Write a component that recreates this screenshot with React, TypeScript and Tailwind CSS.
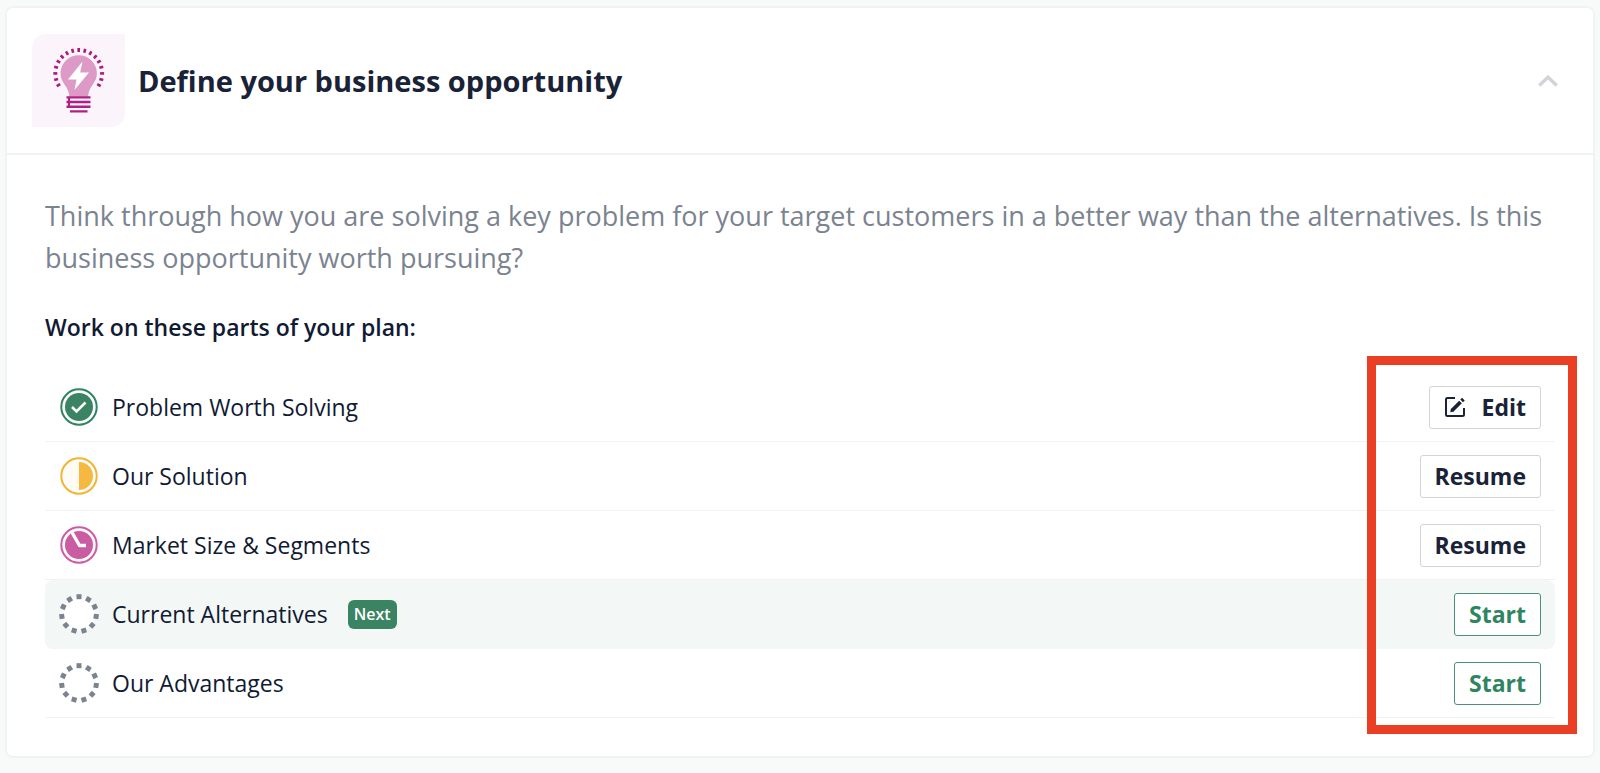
import { clsx } from "clsx";

type PartStatus = "done" | "half" | "started" | "empty";

type PlanPart = {
  label: string;
  status: PartStatus;
  action: "Edit" | "Resume" | "Start";
  isNext?: boolean;
};

const PLAN_PARTS: PlanPart[] = [
  { label: "Problem Worth Solving", status: "done", action: "Edit" },
  { label: "Our Solution", status: "half", action: "Resume" },
  { label: "Market Size & Segments", status: "started", action: "Resume" },
  {
    label: "Current Alternatives",
    status: "empty",
    action: "Start",
    isNext: true,
  },
  { label: "Our Advantages", status: "empty", action: "Start" },
];

const RAY_ANGLES = Array.from({ length: 17 }, (_, i) => (i - 8) * 15);
const DASH_ANGLES = Array.from({ length: 11 }, (_, i) => (i * 360) / 11);

const BulbIcon = () => (
  <svg viewBox="0 0 93 93" className="size-full" aria-hidden="true">
    {RAY_ANGLES.map((angle) => (
      <rect
        key={angle}
        x="45.4"
        y="14"
        width="2.6"
        height="4"
        fill="#ab1a7d"
        transform={`rotate(${angle} 46.7 39.4)`}
      />
    ))}
    <path
      d="M46.7 21.2a18.2 18.2 0 0 1 18.2 18.2c0 9.5-8.2 12.5-8.9 23H37.4c-.7-10.5-8.9-13.5-8.9-23A18.2 18.2 0 0 1 46.7 21.2Z"
      fill="#dd9ac6"
    />
    <path d="M50.5 27.5 36 45.5h8.5L42.5 56 57 38.5h-8.8Z" fill="#fff" />
    <path
      d="M34.5 63.4h24M34.5 68h24M34.5 72.7h24M38 77.4h17.5"
      stroke="#b01f82"
      strokeWidth="2.4"
    />
    <path d="M37 63v10" stroke="#b01f82" strokeWidth="2" />
  </svg>
);

const ChevronIcon = () => (
  <svg
    viewBox="0 0 20 12"
    className="h-3 w-5"
    fill="none"
    stroke="currentColor"
    strokeWidth="3.4"
    aria-hidden="true"
  >
    <path d="m1.2 10.5 8.8-8.3 8.8 8.3" />
  </svg>
);

const EditIcon = () => (
  <svg
    viewBox="0 0 22 22"
    className="size-[22px]"
    fill="none"
    stroke="currentColor"
    aria-hidden="true"
  >
    <path
      d="M11 2H3.5A1.5 1.5 0 0 0 2 3.5v15A1.5 1.5 0 0 0 3.5 20h15a1.5 1.5 0 0 0 1.5-1.5V12"
      strokeWidth="2"
    />
    <path d="m8 14.5 8.5-8.5M17.6 4.9l1.8-1.8" strokeWidth="3.8" />
    <path d="M6.2 16.3 7 12.5l3 3Z" fill="currentColor" stroke="none" />
  </svg>
);

const StatusIcon = ({ status }: { status: PartStatus }) => {
  if (status === "empty") {
    return (
      <svg viewBox="0 0 40 40" className="size-10" aria-hidden="true">
        <circle cx="20" cy="20" r="17" fill="#fff" />
        {DASH_ANGLES.map((angle) => (
          <rect
            key={angle}
            x="17.5"
            y="0.2"
            width="5"
            height="5"
            fill="#7b8390"
            transform={`rotate(${angle} 20 20)`}
          />
        ))}
      </svg>
    );
  }

  return (
    <svg viewBox="0 0 40 40" className="size-10" fill="none" aria-hidden="true">
      {status === "done" && (
        <>
          <circle cx="20" cy="20" r="17.7" fill="#fff" stroke="#2f8560" strokeWidth="2" />
          <circle cx="20" cy="20" r="14" fill="#3b8463" />
          <path d="m13 20 4.5 4.5 9-9" stroke="#fff" strokeWidth="2.6" />
        </>
      )}
      {status === "half" && (
        <>
          <circle cx="20" cy="20" r="17.7" fill="#fff" stroke="#f5b42e" strokeWidth="2" />
          <circle cx="20" cy="20" r="14" fill="#fffbf3" />
          <path d="M20 6a14 14 0 0 1 0 28Z" fill="#f5b942" />
        </>
      )}
      {status === "started" && (
        <>
          <circle cx="20" cy="20" r="17.7" fill="#fff" stroke="#cf5ba5" strokeWidth="2" />
          <circle cx="20" cy="20" r="14" fill="#cb5ba2" />
          <path
            d="m13 7.5 7.5 13H27"
            stroke="#fff"
            strokeWidth="3.4"
            strokeLinejoin="round"
          />
        </>
      )}
    </svg>
  );
};

const PartRow = ({ part }: { part: PlanPart }) => {
  return (
    <li
      className={clsx(
        "flex h-[69px] items-center border-b px-[14px]",
        part.isNext
          ? "rounded-lg border-[#f3f7f6] bg-[#f3f7f6]"
          : "border-[#f1f2f2]"
      )}
    >
      <StatusIcon status={part.status} />
      <span className="ml-[13px] text-[23px]">{part.label}</span>
      {part.isNext && (
        <span className="ml-5 flex h-[29px] items-center rounded-md bg-[#3b8463] px-1.5 text-base font-semibold text-white">
          Next
        </span>
      )}
      <button
        type="button"
        className={clsx(
          "ml-auto flex h-[43px] items-center gap-4 rounded-[3px] border bg-white px-[14px] text-[23px] font-bold",
          part.action === "Start"
            ? "border-[#4a9273] text-[#2f8560]"
            : "border-[#d3d4d6] text-[#1a2238]"
        )}
      >
        {part.action === "Edit" && <EditIcon />}
        {part.action}
      </button>
    </li>
  );
};

export default function App() {
  return (
    <main className="min-h-screen bg-[#f8faf9] px-[5px] pt-[6px] pb-4 font-['Open_Sans',sans-serif] text-[#111a33]">
      <section className="rounded-lg border-2 border-[#f1f3f3] bg-white">
        <header className="flex items-center border-b-2 border-[#f1f3f3] py-[26px] pr-[35px] pl-[25px]">
          <div className="size-[93px] rounded-tl-[14px] rounded-br-[14px] bg-[#fbf4fa]">
            <BulbIcon />
          </div>
          <h2 className="ml-[13px] text-[29px] font-bold text-[#1a2238]">
            Define your business opportunity
          </h2>
          <button
            type="button"
            aria-label="Collapse section"
            className="ml-auto text-[#d1d3d8]"
          >
            <ChevronIcon />
          </button>
        </header>

        <div className="px-[38px] pt-10 pb-[38px]">
          <p className="text-[27px] leading-[42px] text-[#7b8390]">
            Think through how you are solving a key problem for your target
            customers in a better way than the alternatives. Is this business
            opportunity worth pursuing?
          </p>
          <h3 className="mt-8 text-[23px] leading-8 font-semibold">
            Work on these parts of your plan:
          </h3>

          <div className="relative mt-[30px]">
            <ul>
              {PLAN_PARTS.map((part) => (
                <PartRow key={part.label} part={part} />
              ))}
            </ul>
            {/* callout around the action buttons */}
            <div className="pointer-events-none absolute -top-[17px] -right-[22px] -bottom-4 w-[210px] border-[9px] border-[#ea3f25]" />
          </div>
        </div>
      </section>
    </main>
  );
}
